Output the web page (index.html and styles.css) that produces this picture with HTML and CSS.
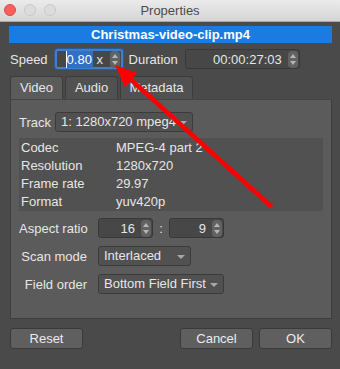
FILE: index.html
```html
<!DOCTYPE html>
<html lang="en">
<head>
  <meta charset="UTF-8">
  <title>Properties</title>
  <link rel="stylesheet" href="styles.css">
</head>
<body>

<div id="window">
  <div class="titlebar">
    <div class="lights">
      <span class="light red"></span>
      <span class="light"></span>
      <span class="light"></span>
    </div>
    <div class="title">Properties</div>
  </div>

  <div class="content">
    <div class="filename">Christmas-video-clip.mp4</div>

    <div class="speedRow">
      <span class="label">Speed</span>
      <div class="spin speed focus">
        <span class="spinText"><span class="sel">0.80</span> x</span>
        <span class="stepper"></span>
      </div>
      <span class="label">Duration</span>
      <div class="spin duration">
        <span class="spinText right">00:00:27:03</span>
        <span class="stepper"></span>
      </div>
    </div>

    <div class="tabs">
      <div class="tab active">Video</div>
      <div class="tab">Audio</div>
      <div class="tab">Metadata</div>
    </div>

    <div class="panel">
      <div class="trackRow">
        <span class="label">Track</span>
        <div class="combo track">1: 1280x720 mpeg4</div>
      </div>

      <div class="info">
        <div class="infoRow"><span class="key">Codec</span><span>MPEG-4 part 2</span></div>
        <div class="infoRow"><span class="key">Resolution</span><span>1280x720</span></div>
        <div class="infoRow"><span class="key">Frame rate</span><span>29.97</span></div>
        <div class="infoRow"><span class="key">Format</span><span>yuv420p</span></div>
      </div>

      <div class="formRow">
        <span class="formLabel">Aspect ratio</span>
        <div class="spin ratio">
          <span class="spinText right">16</span>
          <span class="stepper"></span>
        </div>
        <span class="colon">:</span>
        <div class="spin ratio">
          <span class="spinText right">9</span>
          <span class="stepper"></span>
        </div>
      </div>

      <div class="formRow">
        <span class="formLabel">Scan mode</span>
        <div class="combo scan">Interlaced</div>
      </div>

      <div class="formRow">
        <span class="formLabel">Field order</span>
        <div class="combo field">Bottom Field First</div>
      </div>
    </div>

    <div class="buttons">
      <div class="btn">Reset</div>
      <div class="spacer"></div>
      <div class="btn">Cancel</div>
      <div class="btn">OK</div>
    </div>
  </div>

  <!-- annotation arrow drawn over the dialog -->
  <svg class="arrow" width="340" height="369" viewBox="0 0 340 369">
    <line x1="272" y1="207" x2="128" y2="77" stroke="#ff0000" stroke-width="4.5" />
    <polygon points="115,65 137,73 125,87" fill="#ff0000" />
  </svg>
</div>

</body>
</html>
```

FILE: styles.css
```css
* { margin: 0; padding: 0; box-sizing: border-box; }
html, body { width: 100%; height: 100%; overflow: hidden; }
body {
  font-family: "Liberation Sans", Arial, sans-serif;
  font-size: 13px;
  color: #e6e6e6;
  background: #4a4a4a;
}

#window {
  position: relative;
  width: 340px;
  height: 369px;
}

.titlebar {
  position: relative;
  height: 22px;
  background: linear-gradient(#ebebeb, #d5d5d5);
  border-bottom: 1px solid #a9a9a9;
  display: flex;
  align-items: center;
  justify-content: center;
}
.lights {
  position: absolute;
  left: 4px;
  top: 4px;
  display: flex;
  gap: 8px;
}
.light {
  width: 12px;
  height: 12px;
  border-radius: 50%;
  background: #dcdcdc;
  border: 1px solid #c8c8c8;
}
.light.red { background: #fc605c; border-color: #de4a45; }
.title { color: #4c4c4c; font-size: 13px; }

.content { padding: 0 8px 0 9px; }

.filename {
  margin-top: 4px;
  height: 17px;
  line-height: 17px;
  background: #1b7be0;
  color: #fff;
  font-weight: bold;
  text-align: center;
}

.speedRow {
  margin-top: 6px;
  height: 20px;
  display: flex;
  align-items: center;
}
.speedRow .label { margin-left: 1px; }

.spin {
  height: 20px;
  display: flex;
  align-items: center;
  background: #474747;
  border: 1px solid #383838;
  border-radius: 3px;
  padding: 0 1px 0 4px;
}
.spin.focus {
  border: 2px solid #3d7fd0;
  box-shadow: 0 0 0 1px #2a5c99;
}
.spin.speed { width: 68px; margin-left: 7px; }
.spin.duration { width: 115px; margin-left: 7px; }
.spin.ratio { width: 55px; }

.spinText { flex: 1; white-space: nowrap; }
.spinText.right { text-align: right; padding-right: 6px; }
.sel {
  background: #2f6fc6;
  color: #fff;
  padding: 1px 1px 1px 0;
  border-left: 1px solid #fff;
  margin-left: 5px;
}

.stepper {
  position: relative;
  width: 10px;
  height: 17px;
  border-radius: 4px;
  background: #626262;
}
.stepper::before,
.stepper::after {
  content: "";
  position: absolute;
  left: 2px;
  border-left: 3px solid transparent;
  border-right: 3px solid transparent;
}
.stepper::before { top: 3px; border-bottom: 4px solid #b5b5b5; }
.stepper::after { bottom: 3px; border-top: 4px solid #b5b5b5; }

.speedRow .spin.focus + .label { margin-left: 6px; }

.tabs {
  margin-top: 7px;
  display: flex;
  gap: 2px;
  padding-left: 1px;
  height: 23px;
}
.tab {
  height: 23px;
  padding: 0 6px;
  line-height: 22px;
  background: #515151;
  border: 1px solid #3c3c3c;
  border-bottom: none;
  border-radius: 3px 3px 0 0;
  text-align: center;
}
.tab:nth-child(1) { width: 53px; }
.tab:nth-child(2) { width: 53px; }
.tab:nth-child(3) { width: 73px; }
.tab.active { background: #5b5b5b; }

.panel {
  margin: 0 0 0 1px;
  height: 220px;
  background: #5b5b5b;
  border: 1px solid #3e3e3e;
  border-top-color: #454545;
  padding: 12px 8px 0 8px;
}

.trackRow {
  display: flex;
  align-items: center;
  height: 20px;
}
.combo {
  height: 20px;
  line-height: 18px;
  position: relative;
  background: #515151;
  border: 1px solid #3b3b3b;
  border-radius: 3px;
  padding: 0 15px 0 5px;
  white-space: nowrap;
}
.combo::after {
  content: "";
  position: absolute;
  right: 5px;
  top: 8px;
  border-left: 4px solid transparent;
  border-right: 4px solid transparent;
  border-top: 4px solid #a8a8a8;
}
.combo.track { width: 138px; margin-left: 4px; }
.combo.scan { width: 93px; }
.combo.field { width: 126px; }

.info {
  margin-top: 6px;
  height: 73px;
  background: #515151;
  padding: 1px 0 0 2px;
}
.infoRow {
  height: 18px;
  line-height: 18px;
  display: flex;
}
.infoRow .key { width: 95px; }

.formRow {
  margin-top: 8px;
  height: 20px;
  display: flex;
  align-items: center;
}
.info + .formRow { margin-top: 7px; }
.formLabel {
  width: 68px;
  margin-right: 11px;
  text-align: right;
  white-space: nowrap;
}
.colon { width: 16px; text-align: center; }

.buttons {
  margin-top: 9px;
  display: flex;
  gap: 6px;
  padding-left: 1px;
}
.spacer { flex: 1; }
.btn {
  width: 73px;
  height: 21px;
  line-height: 19px;
  text-align: center;
  background: #5f5f5f;
  border: 1px solid #3a3a3a;
  border-radius: 3px;
  color: #ececec;
}

.arrow {
  position: absolute;
  left: 0;
  top: 0;
  pointer-events: none;
}
```
